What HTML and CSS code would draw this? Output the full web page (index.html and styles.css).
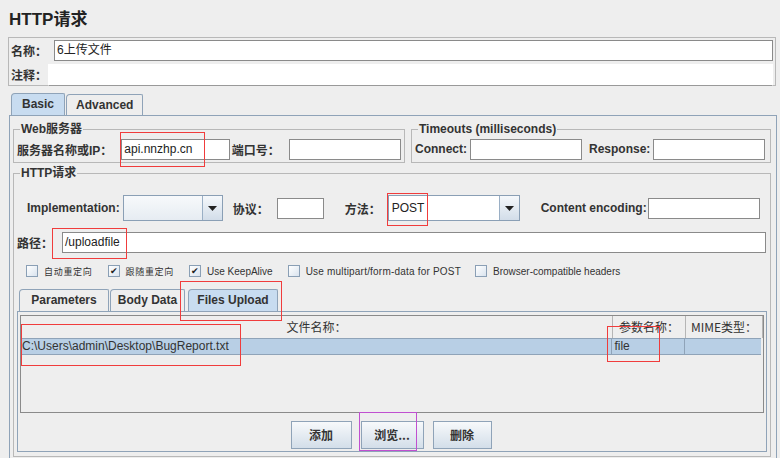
FILE: index.html
```html
<!DOCTYPE html>
<html>
<head>
<meta charset="utf-8">
<link rel="stylesheet" href="styles.css">
</head>
<body>
<div class="title">HTTP请求</div>
<div class="namebox">
  <div class="nrow"><span class="lbl">名称：</span><div class="field name">6上传文件</div></div>
  <div class="nrow"><span class="lbl">注释：</span><div class="field comment"></div></div>
</div>
<div class="tabs">
  <div class="tab sel">Basic</div>
  <div class="tab">Advanced</div>
</div>
<div class="panel">
  <div class="toprow">
    <fieldset class="fs web">
      <legend>Web服务器</legend>
      <div class="frow">
        <span class="lbl">服务器名称或IP：</span><div class="field w108">api.nnzhp.cn</div>
        <span class="lbl">端口号：</span><div class="field w113"></div>
      </div>
    </fieldset>
    <fieldset class="fs tmo">
      <legend>Timeouts (milliseconds)</legend>
      <div class="frow">
        <span class="lbl">Connect:</span><div class="field w112"></div>
        <span class="lbl gap">Response:</span><div class="field w112"></div>
      </div>
    </fieldset>
  </div>
  <fieldset class="fs http">
    <legend>HTTP请求</legend>
    <div class="irow">
      <span class="lbl">Implementation:</span>
      <div class="combo c1"><div class="cval"></div><div class="cbtn"><svg width="9" height="5" viewBox="0 0 9 5"><path d="M0 0H9L4.5 5Z" fill="#222"/></svg></div></div>
      <span class="lbl l-proto">协议：</span><div class="field w46"></div>
      <span class="lbl l-method">方法：</span>
      <div class="combo c2"><div class="cval">POST</div><div class="cbtn"><svg width="9" height="5" viewBox="0 0 9 5"><path d="M0 0H9L4.5 5Z" fill="#222"/></svg></div></div>
      <span class="lbl l-enc">Content encoding:</span><div class="field w112"></div>
    </div>
    <div class="prow"><span class="lbl">路径：</span><div class="field path">/uploadfile</div></div>
    <div class="chkrow">
      <label class="chk"><span class="box"></span><span class="cj">自动重定向</span></label>
      <label class="chk"><span class="box on">✔</span><span class="cj">跟随重定向</span></label>
      <label class="chk"><span class="box on">✔</span>Use KeepAlive</label>
      <label class="chk wide"><span class="box"></span>Use multipart/form-data for POST</label>
      <label class="chk"><span class="box"></span>Browser-compatible headers</label>
    </div>
    <div class="itabs">
      <div class="itab t1">Parameters</div>
      <div class="itab t2">Body Data</div>
      <div class="itab t3 sel">Files Upload</div>
    </div>
    <div class="ipanel">
      <div class="table">
        <div class="thead">
          <div class="th c-file">文件名称：</div>
          <div class="th c-par">参数名称：</div>
          <div class="th c-mime">MIME类型：</div>
        </div>
        <div class="trow">
          <div class="td c-file">C:\Users\admin\Desktop\BugReport.txt</div>
          <div class="td c-par">file</div>
          <div class="td c-mime"></div>
        </div>
      </div>
      <div class="btns">
        <div class="btn">添加</div>
        <div class="btn">浏览...</div>
        <div class="btn">删除</div>
      </div>
    </div>
  </fieldset>
</div>
<div class="mark m1"></div>
<div class="mark m2"></div>
<div class="mark m3"></div>
<div class="mark m4"></div>
<div class="mark m5"></div>
<div class="mark m6"></div>
<div class="mark purple m7"></div>
</body>
</html>
```

FILE: styles.css
```css
* { box-sizing: border-box; }
html, body { margin: 0; padding: 0; }
body {
  width: 780px; height: 458px; overflow: hidden;
  background: #eeeeee;
  font-family: "Liberation Sans", "Noto Sans CJK SC", sans-serif;
  font-size: 12px; color: #333;
  position: relative;
}
.title {
  font-weight: bold; font-size: 17px; color: #222;
  padding: 9px 0 0 9px; height: 36px; line-height: 22px;
}
.namebox {
  margin: 1px 4px 0 8px;
  border: 1px solid #b8b8b8;
  height: 49px;
  padding: 1px 2px 0 2px;
}
.nrow { display: flex; align-items: center; height: 23px; }
.nrow + .nrow { margin-top: 1px; }
.lbl { font-weight: bold; color: #333; white-space: nowrap; }
.field {
  background: #fff; border: 1px solid #8a8a8a; height: 21px;
  line-height: 19px; padding: 0 2px; color: #222;
  font-family: "Liberation Sans", "Noto Sans CJK SC", sans-serif;
}
.field.name { flex: 1; margin-left: 7px; }
.field.comment { flex: 1; border-color: #fff #fff #999 #fff; height: 22px; margin-left: 1px; }
.tabs { display: flex; margin: 7px 0 0 11px; height: 22px; align-items: flex-end; }
.tab {
  height: 21px; line-height: 20px; font-weight: bold; color: #333;
  border: 1px solid #8fa3b8; border-bottom: none; border-radius: 4px 2px 0 0;
  background: #eeeeee; margin-right: 1px;
}
.tab.sel { background: #c8dcf0; height: 22px; padding: 0 10px; }
.tab:not(.sel) { padding: 0 9px; }
.panel {
  margin: 0 3px 0 9px; border: 1px solid #8fa3b8; border-bottom: none;
  height: 344px; padding: 7px 5px 0 3px;
}
.toprow { display: flex; gap: 6px; }
.fs {
  margin: 0; border: 1px solid #b8b8b8; padding: 0 3px 2px 3px; min-width: 0;
}
.fs legend { padding: 0 1px; margin-left: 3px; font-weight: bold; color: #333; line-height: 12px; }
.web { width: 392px; }
.tmo { width: 360px; }
.frow { display: flex; align-items: center; height: 22px; margin-top: 3px; }
.w108 { width: 109px; margin: 0 2px 0 9px; }
.w113 { width: 113px; margin-left: 9px; }
.w112 { width: 112px; margin-left: 2px; }
.tmo .w112 { margin-left: 3px; }
.gap { margin-left: 7px; }
.http { margin-top: 4px; height: 290px; padding: 0 3px 0 3px; }
.irow { display: flex; align-items: center; height: 26px; margin-top: 16px; padding-left: 10px; }
.combo { display: flex; height: 26px; border: 1px solid #8a9fb5; margin-left: 3px; }
.combo .cval { background: #f0f4f8; flex: 1; border-right: 1px solid #9aafc5; padding-left: 3px; line-height: 24px; color: #222; }
.combo.c1 { width: 100px; }
.combo.c1 .cval { background: linear-gradient(#f7f9fb, #e6ecf2); }
.combo.c2 { width: 132px; margin-left: 7px; }
.combo.c2 .cval { background: #fff; }
.combo .cbtn {
  width: 19px; display: flex; align-items: center; justify-content: center;
  background: linear-gradient(#f5f8fb, #d2dde9);
}
.l-proto { margin-left: 10px; }
.w46 { width: 47px; }
.irow .w46 { height: 21px; margin-left: 8px; }
.l-method { margin-left: 21px; }
.l-enc { margin-left: 21px; }
.irow .w112 { margin-left: 1px; height: 21px; }
.prow { display: flex; align-items: center; height: 22px; margin-top: 10px; }
.field.path { flex: 1; margin: 0 1px 0 9px; }
.chkrow { display: flex; align-items: center; height: 16px; margin-top: 10px; padding-left: 9px; font-size: 10px; color: #333; }
.chk { display: flex; align-items: center; margin-right: 15px; white-space: nowrap; }
.chk.wide { letter-spacing: 0.2px; margin-right: 14px; }
.chk .box {
  width: 12px; height: 12px; border: 1px solid #8a9fb5;
  background: linear-gradient(135deg, #ffffff, #d9e3ee);
  margin-right: 6px; font-size: 9px; line-height: 10px; text-align: center; color: #222;
}
.cj { font-size: 9px; font-family: "Noto Sans CJK SC", sans-serif; letter-spacing: 0.7px; }
.itabs { display: flex; margin: 9px 0 0 2px; height: 23px; align-items: flex-end; }
.itab {
  height: 22px; line-height: 21px; font-weight: bold; color: #333; text-align: center;
  border: 1px solid #8fa3b8; border-bottom: none; border-radius: 4px 2px 0 0;
  background: #eeeeee; margin-right: 1px; font-size: 12px;
}
.t1 { width: 90px; }
.t2 { width: 75px; }
.t3 { width: 90px; margin-left: 2px; }
.itab.sel { background: #c8dcf0; }
.ipanel { border: 1px solid #8fa3b8; height: 141px; padding: 3px 2px 0 2px; }
.table { border: 1px solid #8a8a8a; height: 98px; background: #eeeeee; }
.thead { display: flex; height: 22px; }
.th { text-align: center; line-height: 22px; color: #333; font-family: "Noto Sans CJK SC", sans-serif; font-size: 12px; border-right: 1px solid #b5b5b5; }
.c-file { width: 592px; }
.c-par { width: 73px; }
.c-mime { width: 77px; }
.trow { display: flex; height: 17px; background: #b8cfe5; border-top: 1px solid #8fa3b8; border-bottom: 1px solid #8fa3b8; margin-right: 2px; }
.td { line-height: 15px; color: #333; padding-left: 1px; font-size: 12px; }
.td.c-par, .td.c-mime { border-left: 1px solid #8fa3b8; padding-left: 2px; }
.btns { display: flex; justify-content: center; gap: 9px; margin-top: 8px; padding-right: 2px; }
.btn {
  height: 28px; line-height: 26px; text-align: center; font-weight: bold; color: #333;
  border: 1px solid #8fa3b8; background: linear-gradient(#f7f9fb, #d3dee9);
  font-family: "Noto Sans CJK SC", sans-serif; font-size: 12px;
}
.btns .btn:nth-child(1) { width: 61px; }
.btns .btn:nth-child(2) { width: 63px; }
.btns .btn:nth-child(3) { width: 59px; }
.mark { position: absolute; border: 1px solid #f03c3c; }
.mark.purple { border-color: #c050d0; }
.m1 { left: 120px; top: 132px; width: 85px; height: 35px; }
.m2 { left: 387px; top: 193px; width: 41px; height: 33px; }
.m3 { left: 52px; top: 228px; width: 75px; height: 31px; }
.m4 { left: 180px; top: 281px; width: 102px; height: 40px; }
.m5 { left: 21px; top: 324px; width: 220px; height: 42px; }
.m6 { left: 607px; top: 326px; width: 53px; height: 36px; }
.m7 { left: 359px; top: 412px; width: 58px; height: 39px; }
```
